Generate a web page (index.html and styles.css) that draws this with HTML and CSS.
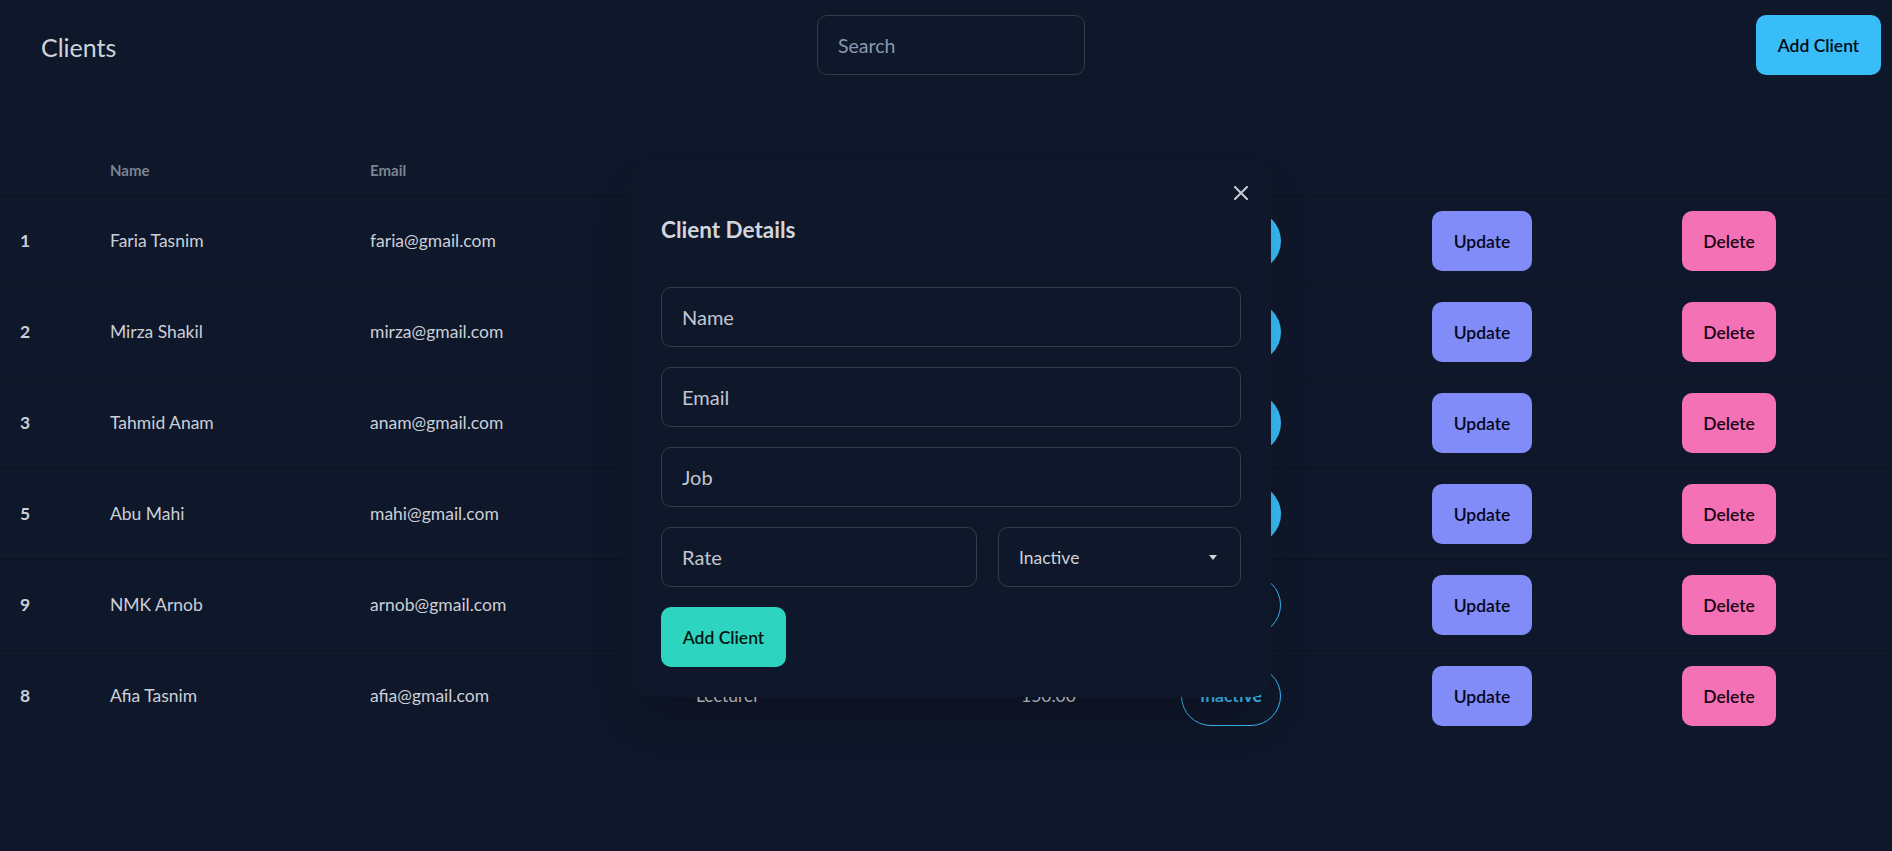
FILE: index.html
```html
<!DOCTYPE html>
<html lang="en">
<head>
<meta charset="utf-8">
<title>Clients</title>
<link rel="stylesheet" href="styles.css">
</head>
<body>
<div class="page">
  <header class="navbar">
    <div class="brand">Clients</div>
    <input class="search" type="text" placeholder="Search">
    <button class="btn btn-primary btn-add">Add Client</button>
  </header>

  <table class="clients">
    <colgroup>
      <col class="c-idx"><col class="c-name"><col class="c-email"><col class="c-job">
      <col class="c-rate"><col class="c-status"><col class="c-upd"><col class="c-del">
    </colgroup>
    <thead>
      <tr><th></th><th>Name</th><th>Email</th><th>Job</th><th>Rate</th><th>Status</th><th></th><th></th></tr>
    </thead>
    <tbody>
      <tr><td class="idx">1</td><td>Faria Tasnim</td><td>faria@gmail.com</td><td>Developer</td><td>120.00</td><td><span class="badge badge-fill">Active</span></td><td><button class="btn btn-upd">Update</button></td><td><button class="btn btn-del">Delete</button></td></tr>
      <tr><td class="idx">2</td><td>Mirza Shakil</td><td>mirza@gmail.com</td><td>Designer</td><td>100.00</td><td><span class="badge badge-fill">Active</span></td><td><button class="btn btn-upd">Update</button></td><td><button class="btn btn-del">Delete</button></td></tr>
      <tr><td class="idx">3</td><td>Tahmid Anam</td><td>anam@gmail.com</td><td>Engineer</td><td>140.00</td><td><span class="badge badge-fill">Active</span></td><td><button class="btn btn-upd">Update</button></td><td><button class="btn btn-del">Delete</button></td></tr>
      <tr><td class="idx">5</td><td>Abu Mahi</td><td>mahi@gmail.com</td><td>Teacher</td><td>90.00</td><td><span class="badge badge-fill">Active</span></td><td><button class="btn btn-upd">Update</button></td><td><button class="btn btn-del">Delete</button></td></tr>
      <tr><td class="idx">9</td><td>NMK Arnob</td><td>arnob@gmail.com</td><td>Doctor</td><td>200.00</td><td><span class="badge badge-outline">Inactive</span></td><td><button class="btn btn-upd">Update</button></td><td><button class="btn btn-del">Delete</button></td></tr>
      <tr><td class="idx">8</td><td>Afia Tasnim</td><td>afia@gmail.com</td><td>Lecturer</td><td>150.00</td><td><span class="badge badge-outline">Inactive</span></td><td><button class="btn btn-upd">Update</button></td><td><button class="btn btn-del">Delete</button></td></tr>
    </tbody>
  </table>

  <div class="modal-box">
    <button class="close" aria-label="Close">
      <svg width="14" height="14" viewBox="0 0 14 14"><path d="M1 1L13 13M13 1L1 13" stroke="#c8ccd4" stroke-width="2" stroke-linecap="round"/></svg>
    </button>
    <h3 class="modal-title">Client Details</h3>
    <form class="form">
      <input class="field" type="text" placeholder="Name">
      <input class="field" type="text" placeholder="Email">
      <input class="field" type="text" placeholder="Job">
      <div class="form-row">
        <input class="field field-rate" type="text" placeholder="Rate">
        <div class="select">
          <span>Inactive</span>
          <svg width="8" height="5" viewBox="0 0 8 5"><path d="M0 0H8L4 5Z" fill="#d0d3da"/></svg>
        </div>
      </div>
      <div><button type="button" class="btn btn-success">Add Client</button></div>
    </form>
  </div>
</div>
</body>
</html>
```

FILE: styles.css
```css
* { box-sizing: border-box; }

html, body {
  margin: 0;
  background: #0f172a;
}

body {
  font-family: Lato, "Liberation Sans", sans-serif;
  color: #cdd1d9;
}

.page {
  position: relative;
  min-height: 851px;
}

.navbar {
  display: grid;
  grid-template-columns: 1fr auto 1fr;
  align-items: center;
  padding: 15px 11px 15px 21px;
  height: 90px;
}

.brand {
  font-size: 25px;
  line-height: 30px;
  margin: 3px 0 0 20px;
  color: #cfd3db;
}

.search {
  width: 268px;
  height: 60px;
  border: 1px solid #343b4b;
  border-radius: 10px;
  background: #0f172a;
  padding: 0 20px;
  font-family: Lato, "Liberation Sans", sans-serif;
  font-size: 19.5px;
  color: #cdd1d9;
  outline: none;
}
.search::placeholder { color: #8898b0; }

.btn {
  display: inline-flex;
  align-items: center;
  justify-content: center;
  height: 60px;
  border: none;
  border-radius: 10px;
  font-family: Lato, "Liberation Sans", sans-serif;
  font-size: 17.5px;
  font-weight: 600;
  padding: 0 20px;
  cursor: pointer;
}

.btn-primary { background: #38bdf8; color: #020b14; }
.btn-add { justify-self: end; width: 125px; }

.btn-upd { background: #818cf8; color: #05071d; width: 100px; }
.btn-del { background: #f471b5; color: #1a0410; width: 94px; }
.btn-success { background: #2dd4bf; color: #011512; width: 125px; }

.clients {
  width: 100%;
  border-collapse: collapse;
  table-layout: fixed;
  margin-top: 55px;
}

.c-idx { width: 90px; }
.c-name { width: 260px; }
.c-email { width: 326px; }
.c-job { width: 325px; }
.c-rate { width: 160px; }
.c-status { width: 251px; }
.c-upd { width: 250px; }
.c-del { width: 230px; }

.clients th {
  text-align: left;
  padding: 15px 20px;
  font-size: 15px;
  line-height: 20px;
  font-weight: 700;
  color: #7c8494;
  border-bottom: 1px solid #0b1221;
}

.clients td {
  padding: 15px 20px;
  font-size: 17.5px;
  line-height: 20px;
  vertical-align: middle;
  color: #cbcfd7;
  white-space: nowrap;
}

.clients tbody tr:not(:last-child) td { border-bottom: 1px solid #0b1221; }

.clients td.idx { font-weight: 700; }

.badge {
  display: inline-flex;
  align-items: center;
  justify-content: center;
  width: 100px;
  height: 60px;
  border-radius: 30px;
  font-size: 17.5px;
  font-weight: 700;
  vertical-align: middle;
}
.badge-fill { background: #38bdf8; color: #020b14; }
.badge-outline { border: 1px solid #38bdf8; color: #38bdf8; }

.modal-box {
  position: absolute;
  left: 631px;
  top: 163px;
  width: 640px;
  padding: 30px;
  background: #0f172a;
  border-radius: 20px;
  box-shadow: 0 25px 50px -12px rgba(0, 0, 0, 0.3);
}

.close {
  position: absolute;
  top: 10px;
  right: 10px;
  width: 40px;
  height: 40px;
  border: none;
  background: transparent;
  border-radius: 50%;
  display: flex;
  align-items: center;
  justify-content: center;
  padding: 0;
}

.modal-title {
  margin: 20px 0 40px;
  font-size: 22.5px;
  line-height: 34px;
  font-weight: 700;
  color: #d2d5dc;
}

.form {
  display: flex;
  flex-direction: column;
  gap: 20px;
}

.field {
  height: 60px;
  width: 100%;
  border: 1px solid #343b4b;
  border-radius: 10px;
  background: #0f172a;
  padding: 0 20px;
  font-family: Lato, "Liberation Sans", sans-serif;
  font-size: 20px;
  color: #cdd1d9;
  outline: none;
}
.field::placeholder { color: #c2c6ce; }

.form-row {
  display: flex;
  gap: 21px;
}

.field-rate { width: 316px; flex: none; }

.select {
  flex: 1;
  height: 60px;
  border: 1px solid #343b4b;
  border-radius: 10px;
  padding: 0 23px 0 20px;
  display: flex;
  align-items: center;
  justify-content: space-between;
  font-size: 17.5px;
  color: #cdd1d9;
}
```
